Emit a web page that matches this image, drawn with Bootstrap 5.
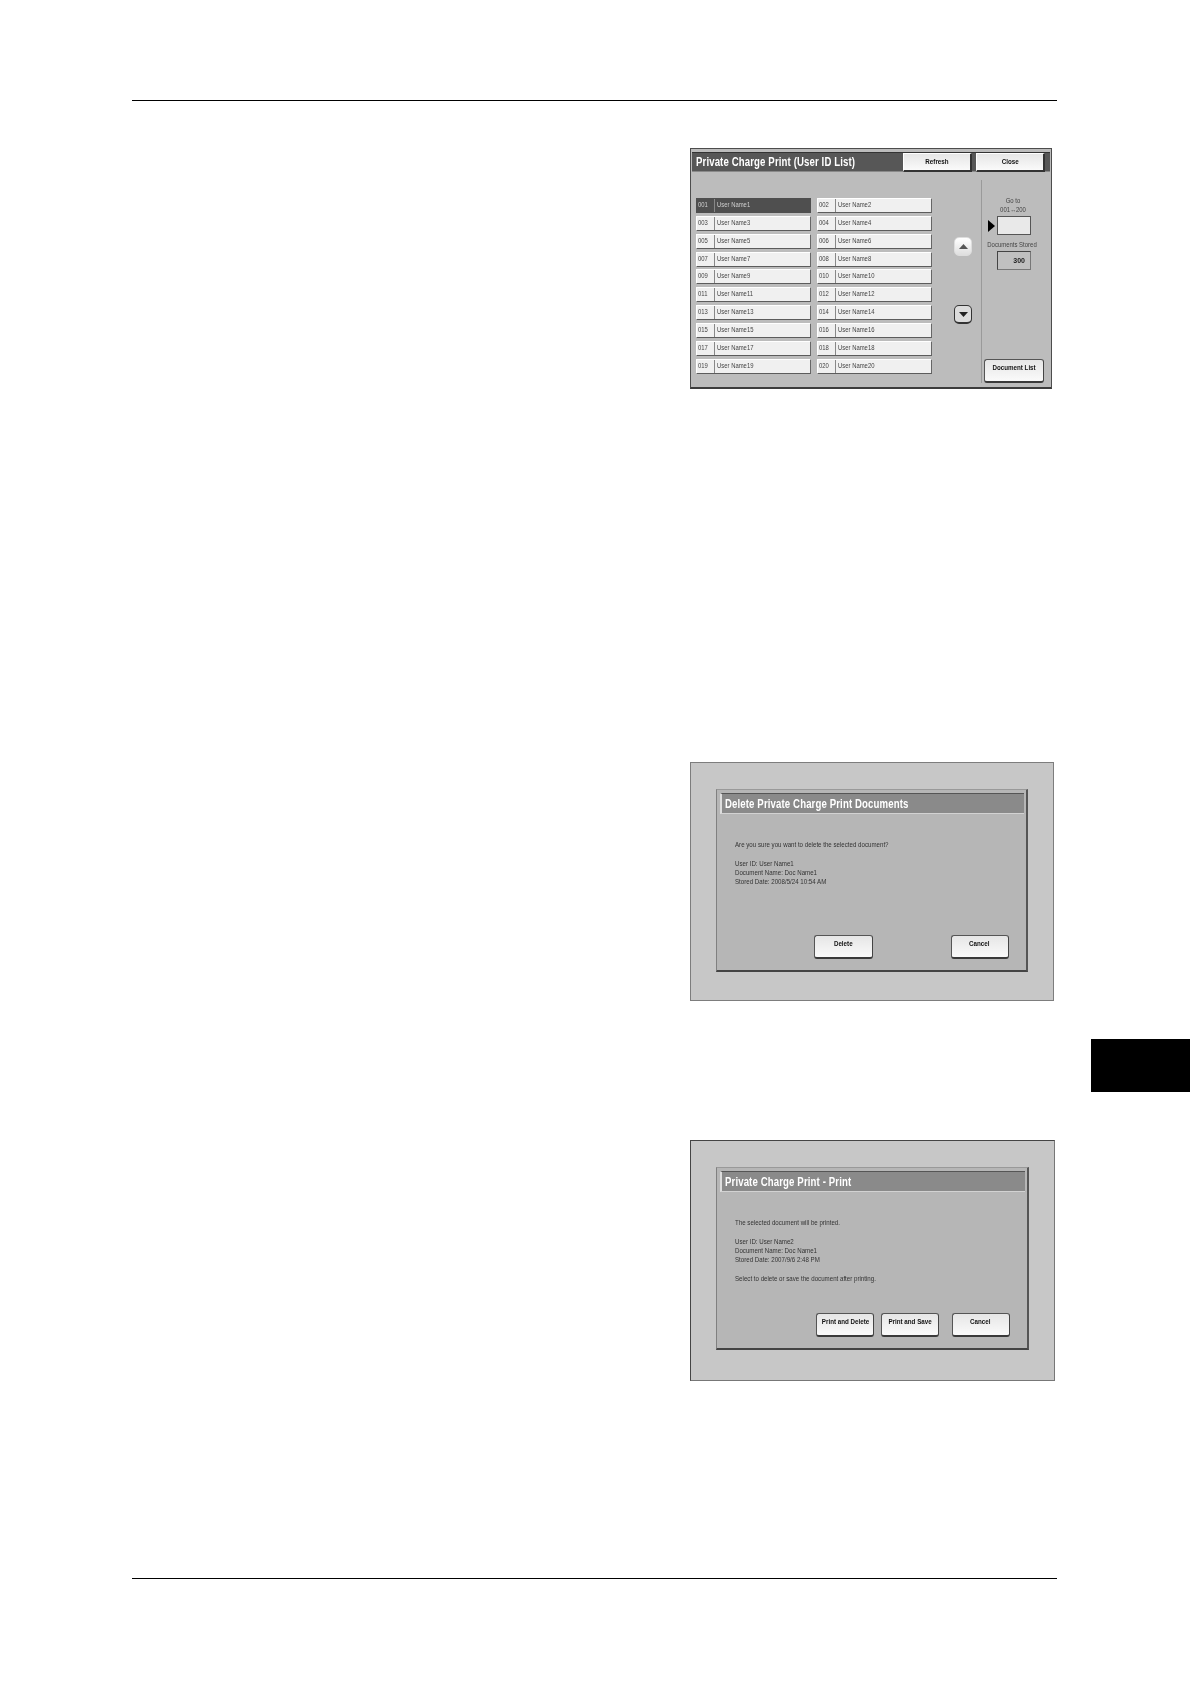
<!DOCTYPE html>
<html lang="en">
<head>
<meta charset="utf-8">
<title>Private Charge Print</title>
<link href="https://cdn.jsdelivr.net/npm/bootstrap@5.3.0/dist/css/bootstrap.min.css" rel="stylesheet">
<style>
html,body{margin:0;background:#fff;width:1190px;height:1684px;overflow:hidden}
body{font-family:"Liberation Sans",Arial,sans-serif;color:#333}
.sheet{width:1190px}
.sheet-main{width:925px;margin-left:132px;flex:none}
.rule-line{height:1px;background:#000}
.rule-top{margin-top:100px}
.rule-bottom{margin-top:197px}
.thumb-col{margin-left:34px;width:99px;flex:none}
.thumb-tab{margin-top:1039px;height:53px;background:#000}
.shot{margin-left:558px;filter:blur(.35px)}
.shot-one{margin-top:47px;width:362px;height:241px;background:#bcbcbc;border:1px solid #4d4d4d;border-bottom:2px solid #3c3c3c;padding:3px 1px 0}
.shot-two{margin-top:373px;width:364px;height:239px;background:#c7c7c7;border:1px solid #7d7d7d;padding:26px 25px}
.shot-three{margin-top:139px;width:365px;height:241px;background:#c7c7c7;border:1px solid #444;border-right-color:#777;border-bottom-color:#777;padding:26px 25px}
.title-dark{height:20px;background:#575757;padding-left:4px;padding-right:5px;border-bottom:1px solid #8a8a8a;border-top:1px solid #333}
.title-text{font-weight:700;color:#fff;font-size:12.5px;letter-spacing:.15px;line-height:1;white-space:nowrap;padding-top:1px;transform:scaleX(.77);transform-origin:left center}
.sq-c{display:inline-block;transform:scaleX(.83);transform-origin:center}
.sq-l{display:inline-block;transform:scaleX(.8);transform-origin:left center}
.fx-btn{--bs-btn-padding-x:0;--bs-btn-padding-y:0;--bs-btn-font-size:7.5px;--bs-btn-font-weight:700;--bs-btn-color:#111;--bs-btn-bg:#f1f1f1;--bs-btn-border-color:#555;--bs-btn-border-radius:1px;--bs-btn-line-height:1;background:linear-gradient(#e6e6e6,#fafafa);text-align:center}
.head-btn{width:69px;height:19px;border-width:1px 2px 2px 1px;border-color:#fff #333 #333 #fff;display:flex;align-items:center;justify-content:center;border-style:solid;border-radius:0}
.tall-btn{padding:0 0 6px;border-width:1px 1.5px 2px 1px;border-radius:3px;border-color:#555 #444 #3a3a3a #555;width:58.5px;height:24px;white-space:nowrap}
.title-gap{gap:4px}
.shot-body{height:212px;padding-left:4px}
.names-grid{display:grid;grid-template-columns:115px 115px;column-gap:6px;grid-auto-rows:15px;row-gap:2.87px;margin-top:26px;width:236px;flex:none}
.name-cell{background:#f0f0f0;border:1px solid #fff;border-right-color:#666;border-bottom:1.5px solid #5c5c5c;font-size:7.4px;color:#444;line-height:12px;white-space:nowrap}
.name-cell.picked{background:#4f4f4f;color:#cfcfcf;border-color:#4f4f4f}
.num-part{width:18px;border-right:1px solid #888;padding-left:1px;flex:none}
.name-part{padding-left:2px}
.arrow-col{width:49px;margin-top:65px;padding-left:22px;gap:49px;flex:none}
.round-btn{width:18px;height:19px;border-radius:5px;border:1px solid #666;background:#f3f3f3;padding:0;display:flex;align-items:center;justify-content:center}
.round-up{border-color:#ddd;background:linear-gradient(#fff,#dedede)}
.round-down{border:1px solid #333;border-bottom-width:2px;background:#dcdcdc}
.side-col{border-left:1px solid #9a9a9a;width:69px;margin-top:8px;height:203px;font-size:7.2px;color:#444;line-height:9px;flex:none;padding:16px 6px 0 0;text-align:center}
.box-row{margin-top:2px;padding-left:6px;height:19px}
.tri-mark{width:0;height:0;border-left:7px solid #000;border-top:6.5px solid transparent;border-bottom:6.5px solid transparent;margin-right:2px}
.go-box{width:34px;height:19px;flex:none;background:#e9e9e9;border:1px solid #555}
.stored-label{margin-top:5px;white-space:nowrap;margin-right:2px}
.stored-box{width:34px;height:19px;flex:none;margin:2px 0 0 15px;background:#c0c0c0;border:1px solid #444;border-right-color:#777;border-bottom-color:#777;text-align:right;padding-right:5px;font-weight:700;font-size:7px;line-height:17px;color:#222}
.doc-btn{margin:auto 0 0 2px;width:60px;height:24px}
.dialog-box{height:183px;background:#b6b6b6;border:1px solid #8a8a8a;border-top-color:#999;border-left-color:#808080;border-right:2px solid #555;border-bottom:2px solid #444;padding:3px 2px 0 3px}
.title-mid{height:21px;background:#8a8a8a;border-top:1px solid #555;border-left:2px solid #ddd;border-bottom:1px solid #d2d2d2;padding-left:3px}
.copy-text{font-size:7.6px;line-height:9.2px;color:#333;margin-left:15px;white-space:nowrap;transform:scaleX(.81);transform-origin:left center}
.copy-two{margin-top:26px}
.copy-three{margin-top:26px}
.block-gap{margin-top:9.5px}
.foot-btns{margin-top:auto;padding-right:15px;padding-bottom:11px}
.gap-right-big{margin-left:78px}
.gap-right-small{margin-left:6.5px}
.gap-right-mid{margin-left:12.5px}
</style>
</head>
<body>
<div class="sheet d-flex align-items-start">
  <main class="sheet-main">
    <div class="rule-line rule-top"></div>

    <section class="shot shot-one d-flex flex-column">
      <div class="title-dark d-flex align-items-center justify-content-between">
        <div class="title-text">Private Charge Print (User ID List)</div>
        <div class="d-flex title-gap">
          <button type="button" class="btn fx-btn head-btn"><span class="sq-c">Refresh</span></button>
          <button type="button" class="btn fx-btn head-btn"><span class="sq-c">Close</span></button>
        </div>
      </div>
      <div class="shot-body d-flex">
        <div class="names-grid">
          <div class="name-cell picked d-flex"><span class="num-part"><span class="sq-l">001</span></span><span class="name-part"><span class="sq-l">User Name1</span></span></div>
          <div class="name-cell d-flex"><span class="num-part"><span class="sq-l">002</span></span><span class="name-part"><span class="sq-l">User Name2</span></span></div>
          <div class="name-cell d-flex"><span class="num-part"><span class="sq-l">003</span></span><span class="name-part"><span class="sq-l">User Name3</span></span></div>
          <div class="name-cell d-flex"><span class="num-part"><span class="sq-l">004</span></span><span class="name-part"><span class="sq-l">User Name4</span></span></div>
          <div class="name-cell d-flex"><span class="num-part"><span class="sq-l">005</span></span><span class="name-part"><span class="sq-l">User Name5</span></span></div>
          <div class="name-cell d-flex"><span class="num-part"><span class="sq-l">006</span></span><span class="name-part"><span class="sq-l">User Name6</span></span></div>
          <div class="name-cell d-flex"><span class="num-part"><span class="sq-l">007</span></span><span class="name-part"><span class="sq-l">User Name7</span></span></div>
          <div class="name-cell d-flex"><span class="num-part"><span class="sq-l">008</span></span><span class="name-part"><span class="sq-l">User Name8</span></span></div>
          <div class="name-cell d-flex"><span class="num-part"><span class="sq-l">009</span></span><span class="name-part"><span class="sq-l">User Name9</span></span></div>
          <div class="name-cell d-flex"><span class="num-part"><span class="sq-l">010</span></span><span class="name-part"><span class="sq-l">User Name10</span></span></div>
          <div class="name-cell d-flex"><span class="num-part"><span class="sq-l">011</span></span><span class="name-part"><span class="sq-l">User Name11</span></span></div>
          <div class="name-cell d-flex"><span class="num-part"><span class="sq-l">012</span></span><span class="name-part"><span class="sq-l">User Name12</span></span></div>
          <div class="name-cell d-flex"><span class="num-part"><span class="sq-l">013</span></span><span class="name-part"><span class="sq-l">User Name13</span></span></div>
          <div class="name-cell d-flex"><span class="num-part"><span class="sq-l">014</span></span><span class="name-part"><span class="sq-l">User Name14</span></span></div>
          <div class="name-cell d-flex"><span class="num-part"><span class="sq-l">015</span></span><span class="name-part"><span class="sq-l">User Name15</span></span></div>
          <div class="name-cell d-flex"><span class="num-part"><span class="sq-l">016</span></span><span class="name-part"><span class="sq-l">User Name16</span></span></div>
          <div class="name-cell d-flex"><span class="num-part"><span class="sq-l">017</span></span><span class="name-part"><span class="sq-l">User Name17</span></span></div>
          <div class="name-cell d-flex"><span class="num-part"><span class="sq-l">018</span></span><span class="name-part"><span class="sq-l">User Name18</span></span></div>
          <div class="name-cell d-flex"><span class="num-part"><span class="sq-l">019</span></span><span class="name-part"><span class="sq-l">User Name19</span></span></div>
          <div class="name-cell d-flex"><span class="num-part"><span class="sq-l">020</span></span><span class="name-part"><span class="sq-l">User Name20</span></span></div>
        </div>
        <div class="arrow-col d-flex flex-column">
          <button type="button" class="round-btn round-up" aria-label="Up"><svg width="9" height="5" viewBox="0 0 9 5"><path d="M0 5 4.5 0 9 5z" fill="#555"/></svg></button>
          <button type="button" class="round-btn round-down" aria-label="Down"><svg width="9" height="5" viewBox="0 0 9 5"><path d="M0 0 4.5 5 9 0z" fill="#222"/></svg></button>
        </div>
        <aside class="side-col d-flex flex-column">
          <div class="sq-c">Go to<br>001↔200</div>
          <div class="box-row d-flex align-items-center"><span class="tri-mark"></span><span class="go-box"></span></div>
          <div class="stored-label sq-c">Documents Stored</div>
          <div class="stored-box">300</div>
          <button type="button" class="btn fx-btn tall-btn doc-btn"><span class="sq-c">Document List</span></button>
        </aside>
      </div>
    </section>

    <section class="shot shot-two">
      <div class="dialog-box d-flex flex-column">
        <div class="title-mid d-flex align-items-center"><div class="title-text">Delete Private Charge Print Documents</div></div>
        <div class="copy-text copy-two">
          <div>Are you sure you want to delete the selected document?</div>
          <div class="block-gap">User ID: User Name1</div>
          <div>Document Name: Doc Name1</div>
          <div>Stored Date: 2008/5/24 10:54 AM</div>
        </div>
        <div class="foot-btns d-flex justify-content-end">
          <button type="button" class="btn fx-btn tall-btn"><span class="sq-c">Delete</span></button>
          <button type="button" class="btn fx-btn tall-btn gap-right-big"><span class="sq-c">Cancel</span></button>
        </div>
      </div>
    </section>

    <section class="shot shot-three">
      <div class="dialog-box d-flex flex-column">
        <div class="title-mid d-flex align-items-center"><div class="title-text">Private Charge Print - Print</div></div>
        <div class="copy-text copy-three">
          <div>The selected document will be printed.</div>
          <div class="block-gap">User ID: User Name2</div>
          <div>Document Name: Doc Name1</div>
          <div>Stored Date: 2007/9/6 2:48 PM</div>
          <div class="block-gap">Select to delete or save the document after printing.</div>
        </div>
        <div class="foot-btns d-flex justify-content-end">
          <button type="button" class="btn fx-btn tall-btn"><span class="sq-c">Print and Delete</span></button>
          <button type="button" class="btn fx-btn tall-btn gap-right-small"><span class="sq-c">Print and Save</span></button>
          <button type="button" class="btn fx-btn tall-btn gap-right-mid"><span class="sq-c">Cancel</span></button>
        </div>
      </div>
    </section>

    <div class="rule-line rule-bottom"></div>
  </main>
  <div class="thumb-col"><div class="thumb-tab"></div></div>
</div>
<script src="https://cdn.jsdelivr.net/npm/bootstrap@5.3.0/dist/js/bootstrap.bundle.min.js"></script>
</body>
</html>
